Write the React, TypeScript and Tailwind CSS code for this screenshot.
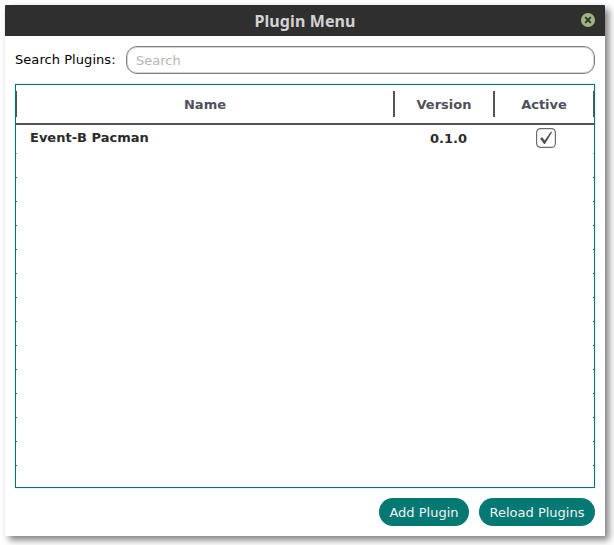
import React from "react";

const emptyRows = Array.from({ length: 13 }, (_, i) => i);

function RowEdge({ faint = false }: { faint?: boolean }) {
  const color = faint ? "bg-[#7fa8a4]" : "bg-[#17605f]";
  return (
    <div className="flex h-px justify-between">
      <span className={`h-px w-px ${color}`} />
      <span className={`h-px w-px ${color}`} />
    </div>
  );
}

function TitleBar() {
  return (
    <header className="flex h-[31px] items-center rounded-t-[1px] bg-[#2f2f2f] pr-[10px] pl-6">
      <h1 className="flex-1 pt-px text-center font-['Noto_Sans',sans-serif] text-[16px] leading-[31px] font-bold tracking-[0.1px] text-[#d3d3d3]">
        Plugin Menu
      </h1>
      <button aria-label="Close" className="-mt-px h-[14px] w-[14px]">
        <svg width="14" height="14" viewBox="0 0 14 14">
          <circle cx="7" cy="7" r="7" fill="#9ab87c" />
          <path d="M4.2 4.2l5.6 5.6M9.8 4.2l-5.6 5.6" stroke="#2f2f2f" strokeWidth="1.8" />
        </svg>
      </button>
    </header>
  );
}

export default function App() {
  return (
    <div className="h-[545px] w-[614px] overflow-hidden bg-white pt-[5px] pl-[5px] font-['DejaVu_Sans',sans-serif] text-[13px]">
      <main className="flex h-[531px] w-[600px] flex-col bg-white shadow-[4px_4px_7px_rgba(0,0,0,0.5)]">
        <TitleBar />
        <div className="flex h-[48px] items-center px-[10px]">
          <label className="w-[111px] tracking-[0.06px] whitespace-nowrap text-black">Search Plugins:</label>
          <input
            placeholder="Search"
            className="h-7 min-w-0 flex-1 rounded-[11px] border border-[#7f7e87] px-[9px] pt-px shadow-[inset_0_0_0_1px_#d6d6da] placeholder:text-[#b4b4b4] placeholder:opacity-100"
          />
        </div>

        <section className="mx-[10px] h-[404px] border border-[#047873] shadow-[0_0_2px_#b9dce8]">
          <div className="flex h-10 border-b-2 border-[#53535f] pt-[6px] font-bold text-[#50505c]">
            <div className="h-[26px] w-[379px] border-r-2 border-l border-[#53535f] text-center leading-[28px]">Name</div>
            <div className="h-[26px] w-[100px] border-r-2 border-[#53535f] text-center leading-[28px]">Version</div>
            <div className="h-[26px] w-[99px] border-r border-[#53535f] text-center leading-[28px]">Active</div>
          </div>
          <div className="flex h-7 font-bold text-[#2b2b2b]">
            <div className="w-[379px] pl-[14px] leading-[26px]">Event-B Pacman</div>
            <div className="w-[100px] pl-[7px] text-center leading-[28px]">0.1.0</div>
            <div className="flex w-[99px] justify-center pt-[3px] pl-[3px]">
              <svg width="20" height="20" viewBox="0 0 20 20">
                <rect x=".6" y=".6" width="18.8" height="18.8" rx="4" fill="#fff" stroke="#6c6b76" strokeWidth="1.2" />
                <path d="M4 10.6l2.3-1.4 2.4 3.4L15 3.6l1 .6-7 11.8h-1z" fill="#50505c" />
              </svg>
            </div>
          </div>
          <RowEdge faint />
          {emptyRows.map((row) => (
            <div key={row} className="pt-[23px]">
              <RowEdge />
            </div>
          ))}
        </section>

        <footer className="mt-[10px] flex justify-end gap-[10px] pr-[10px] text-[#f4f4f4]">
          <button className="h-7 w-[90px] rounded-full bg-[#047873] pt-[2px] whitespace-nowrap">Add Plugin</button>
          <button className="h-7 w-[116px] rounded-full bg-[#047873] pt-[2px] whitespace-nowrap">Reload Plugins</button>
        </footer>
      </main>
    </div>
  );
}
